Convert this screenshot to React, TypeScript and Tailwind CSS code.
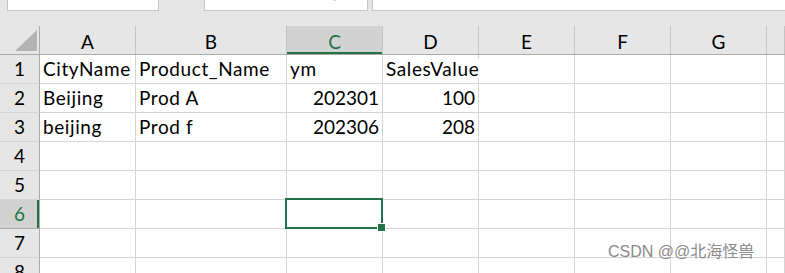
import React from "react";

const cols = [
  { key: "A", w: "w-[96px]" },
  { key: "B", w: "w-[151px]" },
  { key: "C", w: "w-[96px]" },
  { key: "D", w: "w-[96px]" },
  { key: "E", w: "w-[96px]" },
  { key: "F", w: "w-[96px]" },
  { key: "G", w: "w-[96px]" },
  { key: "H", w: "flex-1" },
];

type Cell = { text: string; right?: boolean };

const data: Record<number, Record<string, Cell>> = {
  1: {
    A: { text: "CityName" },
    B: { text: "Product_Name" },
    C: { text: "ym" },
    D: { text: "SalesValue" },
  },
  2: {
    A: { text: "Beijing" },
    B: { text: "Prod A" },
    C: { text: "202301", right: true },
    D: { text: "100", right: true },
  },
  3: {
    A: { text: "beijing" },
    B: { text: "Prod f" },
    C: { text: "202306", right: true },
    D: { text: "208", right: true },
  },
};

const rows = [1, 2, 3, 4, 5, 6, 7, 8];

export default function App() {
  return (
    <div
      className="relative w-[785px] h-[273px] overflow-hidden bg-[#e6e6e6] text-black"
      style={{ fontFamily: "Lato, 'Open Sans', sans-serif" }}
    >
      {/* formula bar strip, mostly scrolled out of view */}
      <div className="flex h-[26px] items-start pl-[7px]">
        <div className="w-[152px] h-[11px] bg-white border-x border-b border-[#c6c6c6] overflow-hidden">
          <div className="text-[18px] leading-none mt-[-17px] pl-[10px] text-[#333]">C6</div>
        </div>
        <div className="ml-[45px] w-[164px] h-[11px] bg-white border-x border-b border-[#c6c6c6] overflow-hidden">
          <div className="flex gap-[40px] text-[18px] leading-none mt-[-17px] pl-[18px] text-[#b0b0b0] italic">
            <span>✕</span>
            <span>✓</span>
            <span>fx</span>
          </div>
        </div>
        <div className="ml-[4px] flex-1 h-[11px] bg-white border-l border-b border-[#c6c6c6]" />
      </div>

      {/* column headers */}
      <div className="flex h-[29px] border-b border-[#ababab]">
        <div className="w-[40px] border-r border-[#ababab] relative">
          <svg className="absolute left-[15px] top-[4px]" width="22" height="21" viewBox="0 0 22 21">
            <polygon points="22,0 22,21 0,21" fill="#b4b4b4" />
          </svg>
        </div>
        {cols.map((c) => {
          const sel = c.key === "C";
          return (
            <div
              key={c.key}
              className={`${c.w} flex items-end justify-center pb-[3px] border-r border-[#c4c4c4] text-[19px] leading-none ${
                sel ? "bg-[#d2d2d2] text-[#217346] shadow-[inset_0_-2px_0_#217346]" : ""
              }`}
            >
              {c.key === "H" ? "" : c.key}
            </div>
          );
        })}
      </div>

      {/* grid rows */}
      {rows.map((r) => (
        <div key={r} className="flex h-[29px]">
          <div
            className={`w-[40px] h-[29px] flex items-end justify-center pb-[5px] border-r border-b border-[#ababab] text-[19px] leading-none ${
              r === 6
                ? "bg-[#d2d2d2] text-[#217346] shadow-[inset_-2px_0_0_#217346]"
                : "border-b-[#d4d4d4]"
            }`}
          >
            {r}
          </div>
          {cols.map((c) => {
            const cell = data[r]?.[c.key];
            const sel = r === 6 && c.key === "C";
            return (
              <div
                key={c.key}
                className={`${c.w} h-[29px] relative flex items-end px-[3px] pb-[5px] bg-white border-r border-b border-[#d4d4d4] text-[19px] leading-none whitespace-nowrap ${
                  cell?.right ? "justify-end" : "justify-start tracking-[0.6px]"
                }`}
              >
                {cell && <span className="relative z-10 shrink-0 bg-white">{cell.text}</span>}
                {sel && (
                  <div className="absolute z-20 -left-[2px] -top-[2px] -right-[1px] -bottom-[1px] border-2 border-[#217346]">
                    <div className="absolute -right-[5px] -bottom-[5px] w-[9px] h-[9px] bg-[#217346] border border-white" />
                  </div>
                )}
              </div>
            );
          })}
        </div>
      ))}

      {/* watermark */}
      <div
        className="absolute z-30 left-[608px] top-[244px] text-[16px] leading-none text-[#8a8a8a] whitespace-nowrap [text-shadow:0_0_1px_#fff]"
        style={{ fontFamily: "'Liberation Sans', 'Noto Sans CJK SC', sans-serif" }}
      >
        CSDN @@北海怪兽
      </div>
    </div>
  );
}
